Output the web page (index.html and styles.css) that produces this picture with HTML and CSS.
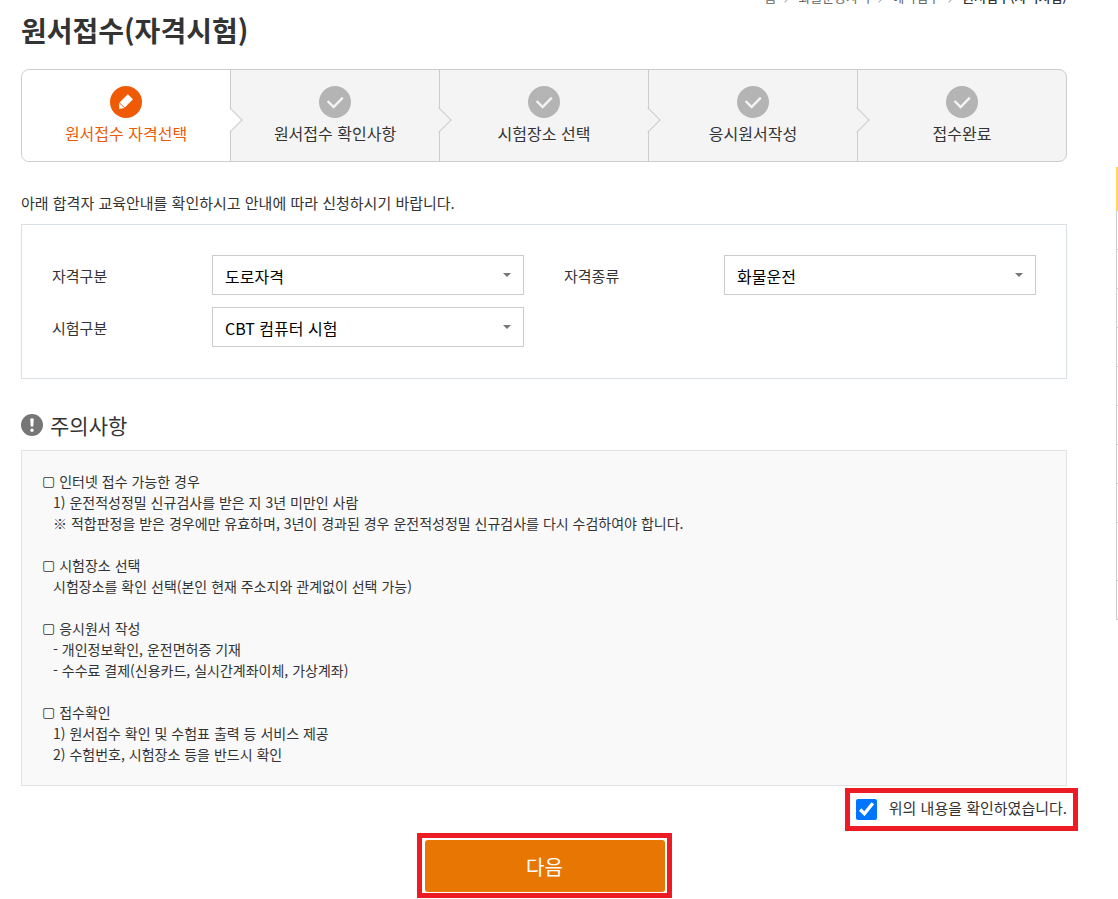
FILE: index.html
```html
<!DOCTYPE html>
<html lang="ko">
<head>
<meta charset="utf-8">
<meta name="viewport" content="width=device-width, initial-scale=1">
<title>원서접수(자격시험)</title>
<link rel="stylesheet" href="styles.css">
</head>
<body>
<svg class="defs" aria-hidden="true">
  <symbol id="check" viewBox="0 0 32 32"><circle cx="16" cy="16" r="16" fill="#b4b4b4"/><path d="M8.600 15l6 6 9.200-9.400" fill="none" stroke="#f4f4f4" stroke-width="2.400"/></symbol>
</svg>
<main class="page">
  <nav class="crumbs" aria-label="현재 위치">
    <a href="#">홈</a><i class="crumb-sep"></i><a href="#">화물운송자격</a><i class="crumb-sep"></i><a href="#">예약접수</a><i class="crumb-sep"></i><strong>원서접수(자격시험)</strong>
  </nav>
  <h1 class="title">원서접수(자격시험)</h1>

  <ol class="steps">
    <li class="step step-on" aria-current="step">
      <svg class="step-icon" viewBox="0 0 32 32" aria-hidden="true"><circle cx="16" cy="16" r="16" fill="#ee5a06"/><path d="M17.800 8.200l5.200 5-8.200 8.200-5.200-5z" fill="#fff"/><path d="M9.100 17l5.200 5-5.200 1z" fill="#fff"/></svg>
      <span>원서접수 자격선택</span>
    </li>
    <li class="step"><svg class="step-icon" aria-hidden="true"><use href="#check"/></svg><span>원서접수 확인사항</span></li>
    <li class="step"><svg class="step-icon" aria-hidden="true"><use href="#check"/></svg><span>시험장소 선택</span></li>
    <li class="step"><svg class="step-icon" aria-hidden="true"><use href="#check"/></svg><span>응시원서작성</span></li>
    <li class="step"><svg class="step-icon" aria-hidden="true"><use href="#check"/></svg><span>접수완료</span></li>
  </ol>

  <p class="intro">아래 합격자 교육안내를 확인하시고 안내에 따라 신청하시기 바랍니다.</p>

  <form class="form">
    <div class="fields">
      <div class="field"><label for="kind">자격구분</label><div class="pick"><select id="kind"><option>도로자격</option></select></div></div>
      <div class="field"><label for="type">자격종류</label><div class="pick"><select id="type"><option>화물운전</option></select></div></div>
      <div class="field"><label for="exam">시험구분</label><div class="pick"><select id="exam"><option>CBT 컴퓨터 시험</option></select></div></div>
    </div>

    <h2 class="notice-title">
      <svg class="notice-icon" viewBox="0 0 22 22" aria-hidden="true"><circle cx="11" cy="11" r="11" fill="#767676"/><path d="M9.300 5.500a1.700 1.200 0 0 1 3.400 0l-.4 7h-2.600z" fill="#fff"/><circle cx="11" cy="16.200" r="1.700" fill="#fff"/></svg>
      주의사항
    </h2>
    <div class="notice">
      <section><h3><span class="mark">▢</span>인터넷 접수 가능한 경우</h3>
        <p>1) 운전적성정밀 신규검사를 받은 지 3년 미만인 사람</p>
        <p>※ 적합판정을 받은 경우에만 유효하며, 3년이 경과된 경우 운전적성정밀 신규검사를 다시 수검하여야 합니다.</p></section>
      <section><h3><span class="mark">▢</span>시험장소 선택</h3>
        <p>시험장소를 확인 선택(본인 현재 주소지와 관계없이 선택 가능)</p></section>
      <section><h3><span class="mark">▢</span>응시원서 작성</h3>
        <p>- 개인정보확인, 운전면허증 기재</p>
        <p>- 수수료 결제(신용카드, 실시간계좌이체, 가상계좌)</p></section>
      <section><h3><span class="mark">▢</span>접수확인</h3>
        <p>1) 원서접수 확인 및 수험표 출력 등 서비스 제공</p>
        <p>2) 수험번호, 시험장소 등을 반드시 확인</p></section>
    </div>

    <div class="agree">
      <input type="checkbox" id="agree" checked>
      <label for="agree">위의 내용을 확인하였습니다.</label>
    </div>
    <div class="next"><button type="button">다음</button></div>
  </form>
</main>
<aside class="quick" aria-hidden="true">
  <div class="quick-head"></div>
  <div class="quick-item"></div><div class="quick-item"></div><div class="quick-item"></div><div class="quick-item"></div><div class="quick-item"></div><div class="quick-item"></div><div class="quick-item"></div><div class="quick-item"></div><div class="quick-item quick-tall"></div><div class="quick-item"></div>
</aside>
</body>
</html>
```
FILE: styles.css
```css
* { box-sizing: border-box; }
body {
  margin: 0;
  overflow: hidden;
  background: #fff;
  color: #333;
  font: 15px/20px "Noto Sans CJK KR", "Noto Sans", sans-serif;
}
h1, h2, h3, p, ol { margin: 0; padding: 0; }
.defs { position: absolute; width: 0; height: 0; }
.page { padding: 0 51px 0 21px; }

.crumbs {
  display: flex;
  justify-content: flex-end;
  align-items: center;
  height: 20px;
  margin-top: -13px;
  font-size: 13px;
  color: #666;
}
.crumbs a { color: inherit; text-decoration: none; }
.crumbs strong { font-weight: 500; color: #333; }
.crumb-sep {
  width: 8px;
  height: 8px;
  margin: 0 9px 0 5px;
  border: solid #aaa;
  border-width: 1px 1px 0 0;
  transform: rotate(45deg);
}
.title { padding-top: 2px; font-size: 28px; line-height: 42px; font-weight: 700; margin-bottom: 18px; }

.steps {
  display: flex;
  list-style: none;
  border: 1px solid #ccc;
  border-radius: 8px;
  background: #f4f4f4;
}
.step {
  position: relative;
  flex: 1;
  display: flex;
  flex-direction: column;
  align-items: center;
  gap: 3px;
  padding: 16px 0;
  font-size: 16px;
  line-height: 24px;
}
.step:not(:last-child) { border-right: 1px solid #ccc; }
.step:not(:last-child)::after {
  content: "";
  position: absolute;
  z-index: 1;
  top: 41px;
  right: -9px;
  width: 17px;
  height: 17px;
  background: linear-gradient(to top right, transparent 50%, #f4f4f4 50%);
  border: solid #ccc;
  border-width: 1px 1px 0 0;
  transform: rotate(45deg);
}
.step-on { color: #ee5a06; background: #fff; border-radius: 7px 0 0 7px; }
.step.step-on::after { background: linear-gradient(to top right, transparent 50%, #fff 50%); }
.step-icon { width: 32px; height: 32px; }

.intro { margin: 31px 0 11px; }
.fields {
  display: grid;
  grid-template-columns: 1fr 1fr;
  gap: 12px 40px;
  padding: 30px 30px 31px;
  border: 1px solid #d8dfe5;
}
.field { display: flex; align-items: center; }
.field label { width: 160px; padding-top: 2px; }
.pick { position: relative; flex: 1; }
.pick::after {
  content: "";
  position: absolute;
  top: 18px;
  right: 13px;
  border: 4px solid transparent;
  border-top-color: #777;
  border-bottom: 0;
  pointer-events: none;
}
select {
  display: block;
  width: 100%;
  height: 40px;
  padding: 2px 30px 0 12px;
  border: 1px solid #ccc;
  border-radius: 0;
  background: #fff;
  color: #000;
  font: inherit;
  font-size: 16px;
  appearance: none;
}

.notice-title {
  display: flex;
  align-items: center;
  gap: 7px;
  margin: 31px 0 10px;
  font-size: 21px;
  line-height: 30px;
  font-weight: 400;
}
.notice-icon { width: 22px; height: 22px; }
.notice {
  display: grid;
  gap: 21px;
  padding: 20px;
  border: 1px solid #e3e3e3;
  background: #f9f9f9;
  font-size: 14px;
  line-height: 21px;
}
.notice h3 { display: flex; gap: 4px; font: inherit; }
.mark { font-family: "DejaVu Sans", sans-serif; }
.notice p { padding-left: 11px; }

.agree {
  display: flex;
  align-items: center;
  gap: 12px;
  width: fit-content;
  margin: 2px -11px 2px auto;
  padding: 6px;
  border: 5px solid #ed1c24;
}
.agree label { padding-bottom: 3px; line-height: 18px; }
.agree input { width: 21px; height: 21px; margin: 0; accent-color: #0075ff; }
.next {
  width: fit-content;
  margin: 0 auto;
  padding: 2px 2px 1px 3px;
  border: 5px solid #ed1c24;
}
.next button {
  display: block;
  width: 240px;
  height: 52px;
  padding: 2px 0 0;
  border: 0;
  border-radius: 3px;
  background: #e77602;
  color: #fff;
  font: inherit;
  font-size: 20px;
}

.quick {
  position: absolute;
  top: 167px;
  right: 0;
  width: 2px;
}
.quick-head { height: 44px; background: #ffd659; }
.quick-item { height: 39px; border: solid #ccc; border-width: 0 0 1px 1px; }
.quick-tall { height: 58px; }
```
